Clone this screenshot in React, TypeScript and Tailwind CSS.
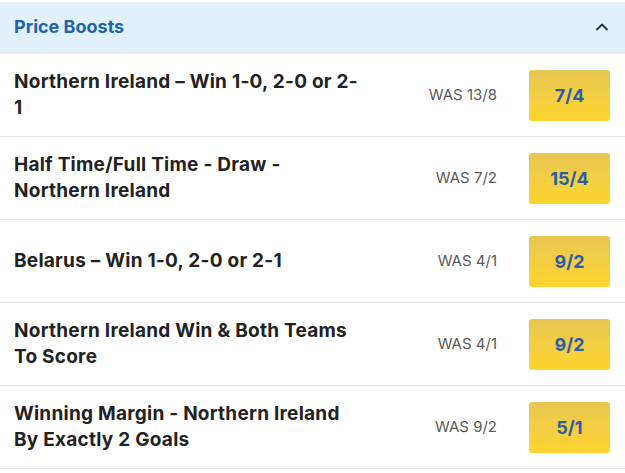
import { ChevronUp } from 'lucide-react'

const boosts = [
  { title: ['Northern Ireland – Win 1-0, 2-0 or 2-', '1'], was: '13/8', odds: '7/4' },
  { title: ['Half Time/Full Time - Draw -', 'Northern Ireland'], was: '7/2', odds: '15/4' },
  { title: ['Belarus – Win 1-0, 2-0 or 2-1'], was: '4/1', odds: '9/2' },
  { title: ['Northern Ireland Win & Both Teams', 'To Score'], was: '4/1', odds: '9/2' },
  { title: ['Winning Margin - Northern Ireland', 'By Exactly 2 Goals'], was: '9/2', odds: '5/1' },
]

export default function App() {
  return (
    <div className="w-[625px] h-[473px] bg-white pt-[2px] overflow-hidden" style={{ fontFamily: 'Inter, "Noto Sans", sans-serif' }}>
      {/* Header */}
      <div className="h-[52px] bg-[#e0f0fd] flex items-center justify-between pl-[14px] pr-[13px] pb-[3px]">
        <span className="text-[18px] font-bold text-[#1d63ad]">Price Boosts</span>
        <ChevronUp className="w-[20px] h-[20px] text-[#1d3557]" strokeWidth={2.2} />
      </div>

      {/* Rows */}
      {boosts.map((b, i) => (
        <div key={i} className="h-[83px] border-b border-[#e6e6e6] flex items-center pl-[14px] pr-[15px]">
          <div className="flex-1 text-[19px] leading-[26px] font-bold tracking-[0.25px] text-[#222222]">
            {b.title.map((line, j) => (
              <div key={j}>{line}</div>
            ))}
          </div>
          <span className="text-[15px] text-[#595959] mr-[32px]">WAS {b.was}</span>
          <button className="w-[81px] h-[51px] rounded-[3px] bg-gradient-to-b from-[#e9c652] to-[#fed52b] text-[18px] font-bold text-[#2b5ea5]">
            {b.odds}
          </button>
        </div>
      ))}
    </div>
  )
}
